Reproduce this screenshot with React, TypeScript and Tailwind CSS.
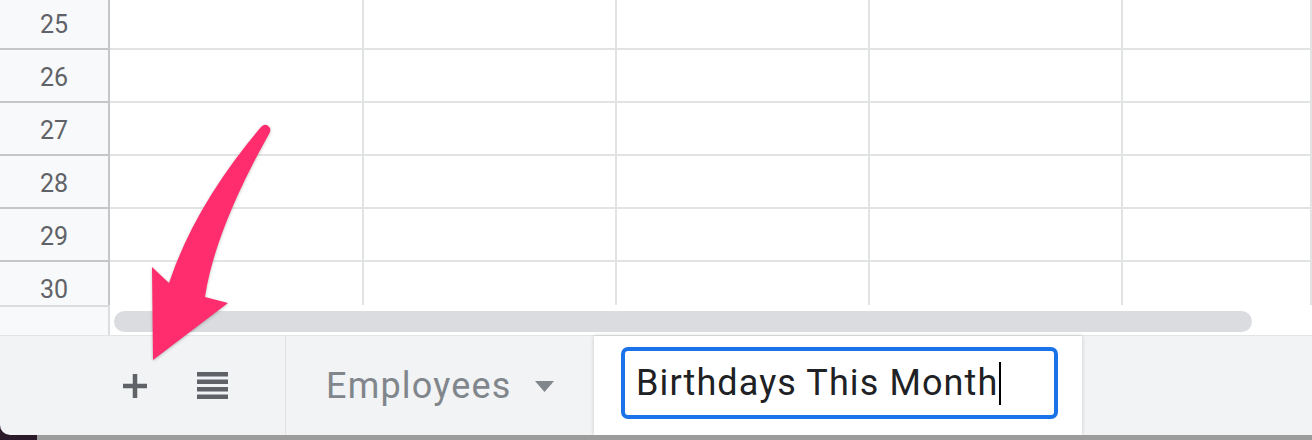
import React from "react";

const ROWS = [25, 26, 27, 28, 29, 30];
const COLS = ["w-[254px]", "w-[253px]", "w-[253px]", "w-[253px]", "flex-1"];

function Row({ n }: { n: number }) {
  return (
    <div className="flex h-[53px]">
      <div className="flex w-[110px] shrink-0 items-center justify-center border-b-2 border-r-2 border-[#c4c6c8] bg-[#f8f9fa] pt-[4px] text-[25px] text-[#5f6368]">
        {n}
      </div>
      {COLS.map((c, i) => (
        <div key={i} className={`${c} shrink-0 border-b-2 border-r-2 border-[#e2e3e3] bg-white`} />
      ))}
    </div>
  );
}

function PlusIcon() {
  return (
    <svg width="26" height="26" viewBox="0 0 26 26">
      <path d="M13 1v24M1 13h24" stroke="#5f6368" strokeWidth="4.5" />
    </svg>
  );
}

function ListIcon() {
  return (
    <svg width="31" height="27" viewBox="0 0 31 27">
      <rect x="0" y="0" width="31" height="4.5" fill="#5f6368" />
      <rect x="0" y="7.5" width="31" height="4.5" fill="#5f6368" />
      <rect x="0" y="15" width="31" height="4.5" fill="#5f6368" />
      <rect x="0" y="22.5" width="31" height="4.5" fill="#5f6368" />
    </svg>
  );
}

function Arrow() {
  return (
    <svg
      className="pointer-events-none absolute left-0 top-0"
      width="1312"
      height="440"
      viewBox="0 0 1312 440"
      style={{ filter: "drop-shadow(0 1px 1.5px rgba(0,0,0,0.25))" }}
    >
      <path
        d="M261 127 Q266 122 270 128 Q271 131 269 134 Q215 230 205 297 L228 303 L153 360 L152 267 L169 283 Q195 205 261 127 Z"
        fill="#ff2d6d"
      />
    </svg>
  );
}

export default function App() {
  return (
    <div
      className="relative h-[440px] w-[1312px] overflow-hidden bg-white"
      style={{ fontFamily: "Roboto, 'Liberation Sans', sans-serif" }}
    >
      {/* grid */}
      <div className="h-[305px] overflow-hidden">
        <div className="-mt-[3px]">
          {ROWS.map((n) => (
            <Row key={n} n={n} />
          ))}
        </div>
      </div>

      {/* scrollbar strip */}
      <div className="flex h-[30px]">
        <div className="w-[110px] shrink-0 border-r-2 border-t-2 border-[#dcdddf] bg-[#f8f9fa]" />
        <div className="flex-1 pl-[4px] pt-[6px]">
          <div className="h-[21px] w-[1138px] rounded-full bg-[#dadce0]" />
        </div>
      </div>

      {/* sheet tab bar */}
      <div className="bg-[#2a1a2a]">
        <div className="flex h-[100px] rounded-bl-[10px] border-t border-[#e3e4e6] bg-[#f1f3f4]">
          <div className="flex w-[285px] shrink-0 items-center gap-[49px] pl-[122px]">
            <PlusIcon />
            <ListIcon />
          </div>
          <div className="w-[1px] bg-[#dfe1e4]" />
          <div className="flex w-[308px] shrink-0 items-center pl-[40px] text-[#80868b]">
            <span className="text-[36px] tracking-[1.2px]">Employees</span>
            <svg className="ml-[23px] mt-[2px]" width="19" height="11" viewBox="0 0 19 11">
              <path d="M0 0h19L9.5 11z" fill="#80868b" />
            </svg>
          </div>
          <div className="flex w-[488px] shrink-0 items-start bg-white pl-[27px] pt-[11px] shadow-[0_0_4px_rgba(0,0,0,0.18)]">
            <div className="flex h-[72px] w-[437px] items-center rounded-[7px] border-4 border-[#1a73e8] pl-[11px]">
              <span className="text-[36px] tracking-[1.1px] text-[#202124]">Birthdays This Month</span>
              <span className="ml-[1px] h-[43px] w-[2px] bg-black" />
            </div>
          </div>
          <div className="flex-1" />
        </div>
        <div className="flex h-[5px]">
          <div className="w-[37px] bg-[#2a1a2a]" />
          <div className="flex-1 bg-[#9c9c9c]" />
        </div>
      </div>

      <Arrow />
    </div>
  );
}
